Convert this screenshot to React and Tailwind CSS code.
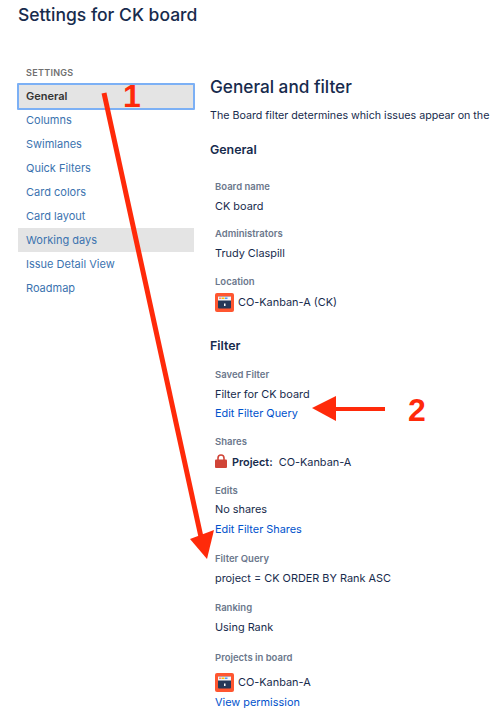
const font = { fontFamily: 'Inter, sans-serif' };

function NavItem({ children, selected, hover }) {
  if (selected) {
    return (
      <div className="-mx-px -mb-[2px] flex h-[27px] items-center rounded-[1px] border-2 border-[#7cb0f5] bg-[#e4e4e4] pl-[7px] text-[11px] font-semibold text-[#333333]">
        {children}
      </div>
    );
  }
  return (
    <div className={`flex h-6 items-center pl-2 text-[11px] text-[#3b73af] ${hover ? 'bg-[#e4e4e4]' : ''}`}>
      {children}
    </div>
  );
}

function ProjectIcon() {
  return (
    <svg width="19" height="19" viewBox="0 0 19 19" className="shrink-0">
      <rect width="19" height="19" rx="2" fill="#ff5630" />
      <rect x="3" y="3.5" width="13" height="12" rx="1" fill="#253858" />
      <rect x="3" y="3.5" width="13" height="4" fill="#f4f5f7" />
      <rect x="4" y="4.5" width="2.5" height="1.5" fill="#ff8b6b" />
      <rect x="7" y="4.5" width="2.5" height="1.5" fill="#ffc400" />
      <rect x="10" y="4.5" width="2.5" height="1.5" fill="#4c9aff" />
      <rect x="9" y="10.5" width="1.5" height="2.5" fill="#ffffff" />
    </svg>
  );
}

function Label({ children, className }) {
  return <div className={`h-[14px] text-[9.5px] leading-[14px] font-semibold text-[#6b778c] ${className}`}>{children}</div>;
}

function Value({ children, className }) {
  return <div className={`flex h-5 items-center text-[10.9px] whitespace-nowrap text-[#172b4d] ${className}`}>{children}</div>;
}

function Link({ children, className }) {
  return <div className={`flex h-5 items-center text-[10.9px] text-[#0052cc] ${className}`}>{children}</div>;
}

export default function App() {
  return (
    <div className="relative h-[727px] w-[491px] overflow-hidden bg-white" style={font}>
      <h1 className="pt-[3px] pl-[18px] text-[17.5px] leading-6 font-medium text-[#172b4d]">Settings for CK board</h1>

      <div className="mt-[38px] flex">
        <aside className="ml-[18px] w-[176px] shrink-0">
          <div className="h-[18px] pt-px pl-2 text-[9px] leading-[14px] font-semibold tracking-[0.3px] text-[#707070]">SETTINGS</div>
          <NavItem selected>General</NavItem>
          <NavItem>Columns</NavItem>
          <NavItem>Swimlanes</NavItem>
          <NavItem>Quick Filters</NavItem>
          <NavItem>Card colors</NavItem>
          <NavItem>Card layout</NavItem>
          <NavItem hover>Working days</NavItem>
          <NavItem>Issue Detail View</NavItem>
          <NavItem>Roadmap</NavItem>
        </aside>

        <main className="ml-4 w-[281px] shrink-0">
          <h2 className="mt-[10px] text-[17.2px] leading-6 font-medium whitespace-nowrap text-[#172b4d]">General and filter</h2>
          <p className="mt-[9px] text-[10.7px] leading-4 whitespace-nowrap text-[#172b4d]">
            The Board filter determines which issues appear on the
          </p>
          <h3 className="mt-[16px] text-[12.4px] leading-5 font-semibold text-[#172b4d]">General</h3>

          <div className="mt-[20px] pl-[5px]">
            <Label>Board name</Label>
            <Value className="mt-[2px]">CK board</Value>
            <Label className="mt-[11px]">Administrators</Label>
            <Value className="mt-[2px]">Trudy Claspill</Value>
            <Label className="mt-[12px]">Location</Label>
            <Value className="mt-[3px] gap-1">
              <ProjectIcon />
              CO-Kanban-A (CK)
            </Value>
          </div>

          <h3 className="mt-[24px] text-[12.4px] leading-5 font-semibold text-[#172b4d]">Filter</h3>

          <div className="mt-[12px] pl-[5px]">
            <Label>Saved Filter</Label>
            <Value className="mt-[2px]">Filter for CK board</Value>
            <Link className="-mt-px">Edit Filter Query</Link>
            <Label className="mt-[12px]">Shares</Label>
            <Value className="mt-[3px] gap-[5px]">
              <svg width="12" height="14" viewBox="0 0 12 14" className="mb-[3px] shrink-0">
                <path d="M3 6V4a3 3 0 0 1 6 0v2" fill="none" stroke="#d04437" strokeWidth="1.6" />
                <rect y="5.5" width="12" height="8.5" rx="1" fill="#d04437" />
              </svg>
              <span className="font-semibold">Project:</span>
              <span className="ml-px">CO-Kanban-A</span>
            </Value>
            <Label className="mt-[12px]">Edits</Label>
            <Value className="mt-px">No shares</Value>
            <Link>Edit Filter Shares</Link>
            <Label className="mt-[13px]">Filter Query</Label>
            <Value className="mt-[2px]">project = CK ORDER BY Rank ASC</Value>
            <Label className="mt-[13px]">Ranking</Label>
            <Value className="mt-[2px]">Using Rank</Value>
            <Label className="mt-[14px]">Projects in board</Label>
            <Value className="mt-[7px] gap-1">
              <ProjectIcon />
              CO-Kanban-A
            </Value>
            <Link>View permission</Link>
          </div>
        </main>
      </div>

      {/* annotations drawn over the page */}
      <svg width="491" height="727" className="absolute top-0 left-0">
        <line x1="104" y1="93" x2="201" y2="537" stroke="#ff2a0a" strokeWidth="5" />
        <polygon points="190,539 207,559 214,530" fill="#ff2a0a" />
        <rect x="334" y="407" width="51" height="4" fill="#ff2a0a" />
        <polygon points="312,408 336,396 336,421" fill="#ff2a0a" />
      </svg>
      <div className="absolute top-[80px] left-[123px] text-[32px] leading-8 font-bold text-[#ff2a0a]" style={{ fontFamily: '"Liberation Sans", sans-serif' }}>1</div>
      <div className="absolute top-[394px] left-[408px] text-[32px] leading-8 font-bold text-[#ff2a0a]" style={{ fontFamily: '"Liberation Sans", sans-serif' }}>2</div>
    </div>
  );
}
